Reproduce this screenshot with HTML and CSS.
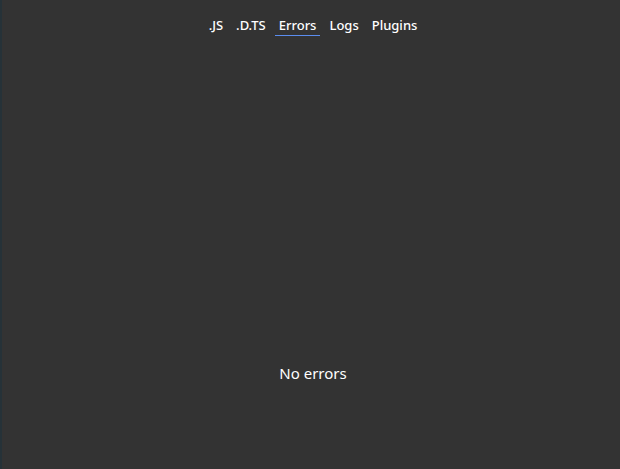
FILE: index.html
```html
<!DOCTYPE html>
<html>
<head>
<meta charset="utf-8">
<link rel="stylesheet" href="styles.css">
</head>
<body>
<div class="app">
  <div class="edge"></div>
  <div class="main">
    <nav class="tabs">
      <span class="tab">.JS</span>
      <span class="tab">.D.TS</span>
      <span class="tab active">Errors</span>
      <span class="tab">Logs</span>
      <span class="tab">Plugins</span>
    </nav>
    <div class="content">
      <p class="empty">No errors</p>
    </div>
  </div>
</div>
</body>
</html>
```

FILE: styles.css
```css
html, body {
  margin: 0;
  padding: 0;
  height: 100%;
  background: #333333;
}
.app {
  display: flex;
  height: 469px;
  font-family: "Noto Sans", "Open Sans", sans-serif;
  color: #ffffff;
}
.edge {
  width: 2px;
  background: #263238;
}
.main {
  flex: 1;
  display: flex;
  flex-direction: column;
  background: #333333;
}
.tabs {
  display: flex;
  justify-content: center;
  gap: 5px;
  padding-top: 16px;
  padding-left: 4px;
}
.tab {
  font-size: 13px;
  font-weight: 500;
  padding: 0 4px 1px;
  line-height: 18px;
  border-bottom: 1px solid transparent;
}
.tab.active {
  border-bottom-color: #5b8def;
}
.content {
  flex: 1;
  display: flex;
  justify-content: center;
  padding-left: 4px;
}
.empty {
  margin: 0;
  margin-top: 327px;
  font-size: 15px;
  line-height: 20px;
  font-weight: 400;
}
```
